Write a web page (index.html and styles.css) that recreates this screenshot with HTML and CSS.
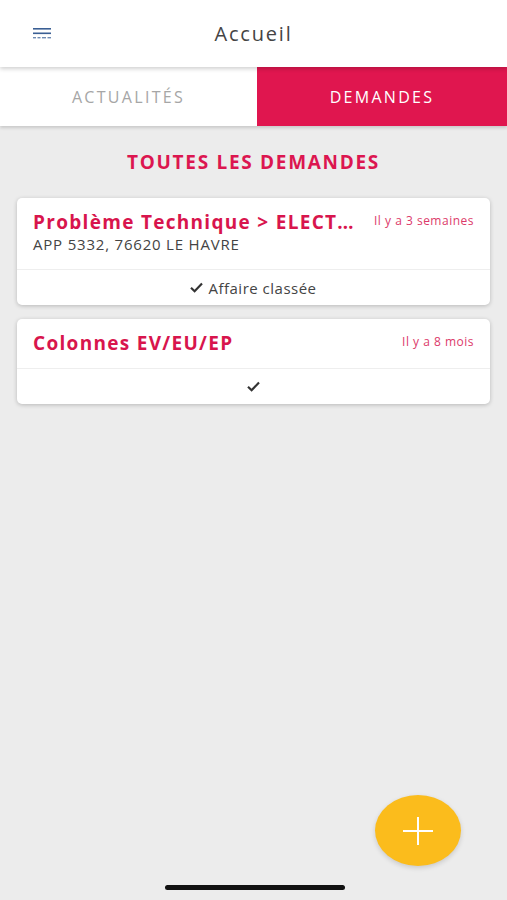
FILE: index.html
```html
<!DOCTYPE html>
<html lang="fr">
<head>
  <meta charset="UTF-8">
  <meta name="viewport" content="width=device-width, initial-scale=1.0">
  <title>Accueil</title>
  <link rel="stylesheet" href="styles.css">
</head>
<body>
  <div class="app">
    <header class="topbar">
      <button class="menu-btn" aria-label="Menu">
        <svg width="18" height="12" viewBox="0 0 18 12">
          <rect x="0" y="0" width="18" height="1.6" fill="#3a5f94"/>
          <rect x="0" y="4.5" width="18" height="1.6" fill="#3a5f94"/>
          <rect x="0" y="9" width="3" height="1.4" fill="#6f8bb3"/>
          <rect x="4.5" y="9" width="3" height="1.4" fill="#6f8bb3"/>
          <rect x="9" y="9" width="4" height="1.4" fill="#6f8bb3"/>
          <rect x="14.5" y="9" width="3.5" height="1.4" fill="#6f8bb3"/>
        </svg>
      </button>
      <h1 class="topbar-title">Accueil</h1>
    </header>

    <nav class="tabs">
      <div class="tab">ACTUALITÉS</div>
      <div class="tab active">DEMANDES</div>
    </nav>

    <main class="content">
      <h2 class="section-title">TOUTES LES DEMANDES</h2>

      <div class="card">
        <div class="card-body">
          <div class="card-head">
            <span class="card-title">Problème Technique &gt; ELECTRICITÉ</span>
            <span class="card-time">Il y a 3 semaines</span>
          </div>
          <div class="card-address">APP 5332, 76620 LE HAVRE</div>
        </div>
        <div class="card-foot">
          <svg class="check" width="13" height="11" viewBox="0 0 13 11"><path d="M1 5.8 L4.6 9.2 L12 1.6" fill="none" stroke="#333" stroke-width="2.2"/></svg>
          Affaire classée
        </div>
      </div>

      <div class="card">
        <div class="card-body">
          <div class="card-head">
            <span class="card-title">Colonnes EV/EU/EP</span>
            <span class="card-time">Il y a 8 mois</span>
          </div>
        </div>
        <div class="card-foot">
          <svg class="check" width="13" height="11" viewBox="0 0 13 11"><path d="M1 5.8 L4.6 9.2 L12 1.6" fill="none" stroke="#333" stroke-width="2.2"/></svg>
        </div>
      </div>
    </main>

    <button class="fab" aria-label="Nouvelle demande">
      <svg width="32" height="32" viewBox="0 0 32 32">
        <line x1="16" y1="2" x2="16" y2="30" stroke="#fff" stroke-width="2"/>
        <line x1="1" y1="16" x2="31" y2="16" stroke="#fff" stroke-width="2"/>
      </svg>
    </button>

    <div class="home-indicator"></div>
  </div>
</body>
</html>
```

FILE: styles.css
```css
body {
  margin: 0;
  padding: 0;
  font-family: "Open Sans", "Lato", sans-serif;
  background: #ececec;
}

.app {
  position: relative;
  width: 507px;
  height: 900px;
  overflow: hidden;
  background: #ececec;
}

.topbar {
  height: 67px;
  background: #fff;
  display: flex;
  align-items: center;
  justify-content: center;
  position: relative;
  z-index: 2;
  box-shadow: 0 2px 4px rgba(0, 0, 0, 0.18);
}

.menu-btn {
  position: absolute;
  left: 33px;
  top: 28px;
  padding: 0;
  border: none;
  background: none;
  line-height: 0;
}

.topbar-title {
  margin: 0;
  font-size: 20px;
  font-weight: 400;
  color: #444;
  letter-spacing: 1.8px;
  padding-bottom: 1px;
}

.tabs {
  display: flex;
  height: 59px;
  box-shadow: 0 2px 3px rgba(0, 0, 0, 0.15);
  position: relative;
  z-index: 1;
}

.tab {
  flex: 0 0 257px;
  display: flex;
  align-items: center;
  justify-content: center;
  background: #fff;
  color: #a6a6a6;
  font-size: 16px;
  letter-spacing: 2.3px;
}

.tab.active {
  flex: 1;
  background: #e0164f;
  color: #fff;
}

.content {
  padding: 24px 17px 0;
}

.section-title {
  margin: 0 0 24px;
  text-align: center;
  font-size: 19px;
  font-weight: 700;
  color: #dc1650;
  letter-spacing: 1.7px;
  line-height: 24px;
}

.card {
  background: #fff;
  border-radius: 5px;
  box-shadow: 0 1px 4px rgba(0, 0, 0, 0.22);
  margin-bottom: 14px;
}

.card-body {
  padding: 11px 16px 0;
  height: 60px;
  border-bottom: 1px solid #eeeeee;
}

.card:last-child .card-body {
  height: 38px;
}

.card-head {
  display: flex;
  align-items: center;
  gap: 8px;
}

.card-title {
  flex: 1;
  min-width: 0;
  white-space: nowrap;
  overflow: hidden;
  text-overflow: ellipsis;
  font-size: 19px;
  font-weight: 700;
  color: #d8154d;
  letter-spacing: 1.3px;
  line-height: 26px;
}

.card-time {
  font-size: 12px;
  color: #dc3a6a;
  white-space: nowrap;
  letter-spacing: 0.5px;
  line-height: 16px;
  margin-top: -2px;
}

.card-address {
  font-size: 15px;
  color: #444;
  letter-spacing: 0.8px;
  line-height: 18px;
}

.card-foot {
  height: 35px;
  display: flex;
  align-items: center;
  justify-content: center;
  font-size: 15px;
  color: #444;
  gap: 5px;
  letter-spacing: 0.5px;
}

.fab {
  position: absolute;
  left: 375px;
  top: 795px;
  width: 86px;
  height: 71px;
  border-radius: 50%;
  border: none;
  background: #fbbc1c;
  display: flex;
  align-items: center;
  justify-content: center;
  padding: 0;
  box-shadow: 0 2px 5px rgba(0, 0, 0, 0.15);
}

.home-indicator {
  position: absolute;
  left: 165px;
  top: 885px;
  width: 180px;
  height: 5px;
  border-radius: 3px;
  background: #111;
}
```
